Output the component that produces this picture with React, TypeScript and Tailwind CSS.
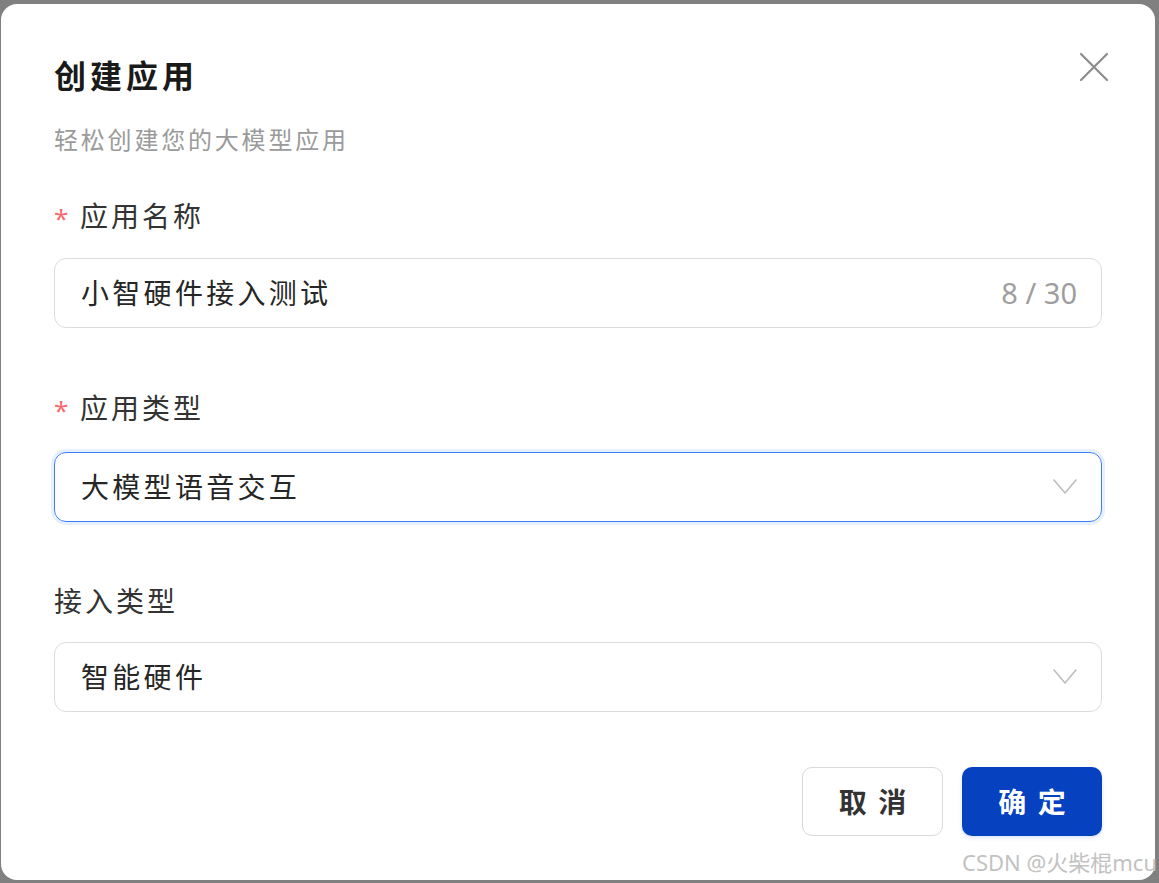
import { useState } from "react";

const font = { fontFamily: '"Noto Sans", "Noto Sans CJK SC", sans-serif' };

function Chevron() {
  return (
    <svg width="24" height="16" viewBox="0 0 24 16" fill="none">
      <polyline
        points="1,1 12,14 23,1"
        stroke="#bdbdbd"
        strokeWidth="1.6"
        strokeLinejoin="round"
        strokeLinecap="round"
      />
    </svg>
  );
}

function Label({ text, required }: { text: string; required?: boolean }) {
  return (
    <div className="flex items-center h-[36px] text-[28px] tracking-[3px] text-[#333333]">
      {required && (
        <span className="text-[#f56c6c] text-[26px] w-[26px] leading-none pt-[4px]">*</span>
      )}
      <span>{text}</span>
    </div>
  );
}

export default function App() {
  const [name] = useState("小智硬件接入测试");

  return (
    <div className="w-[1159px] h-[883px] bg-[#808080] pt-[4px] pl-[1px] pr-[4px] pb-[3px]" style={font}>
      <div className="relative h-full bg-white rounded-[16px] px-[53px] pt-[52px]">
        <button className="absolute right-[46px] top-[48px] w-[30px] h-[30px] flex items-center justify-center">
          <svg width="30" height="30" viewBox="0 0 30 30">
            <path d="M2 2 L28 28 M28 2 L2 28" stroke="#8c8c8c" strokeWidth="2.2" strokeLinecap="round" />
          </svg>
        </button>

        <div className="h-[40px] leading-[40px] text-[32px] font-bold tracking-[4px] text-[#1a1a1a]">创建应用</div>
        <div className="mt-[28px] h-[32px] leading-[32px] text-[24px] tracking-[2.8px] text-[#9a9a9a]">
          轻松创建您的大模型应用
        </div>

        <div className="mt-[42px]">
          <Label text="应用名称" required />
        </div>
        <div className="mt-[24px] h-[70px] rounded-[12px] border border-[#dcdcdc] flex items-center justify-between pl-[26px] pr-[24px]">
          <span className="text-[28px] tracking-[3.3px] text-[#262626]">{name}</span>
          <span className="text-[29px] text-[#9e9e9e]">{name.length} / 30</span>
        </div>

        <div className="mt-[62px]">
          <Label text="应用类型" required />
        </div>
        <div className="mt-[26px] h-[70px] rounded-[12px] border-[1.5px] border-[#3d80ff] shadow-[0_0_0_3px_rgba(61,128,255,0.12)] flex items-center justify-between pl-[26px] pr-[24px]">
          <span className="text-[28px] tracking-[3.3px] text-[#262626]">大模型语音交互</span>
          <Chevron />
        </div>

        <div className="mt-[61px]">
          <Label text="接入类型" />
        </div>
        <div className="mt-[23px] h-[70px] rounded-[12px] border border-[#dcdcdc] flex items-center justify-between pl-[26px] pr-[24px]">
          <span className="text-[28px] tracking-[3.3px] text-[#262626]">智能硬件</span>
          <Chevron />
        </div>

        <div className="mt-[55px] flex justify-end gap-[19px]">
          <button className="w-[141px] h-[69px] rounded-[10px] border border-[#d9d9d9] bg-white text-[28px] font-bold tracking-[2px] text-[#333333] pl-[2px]">
            取 消
          </button>
          <button className="w-[140px] h-[69px] rounded-[10px] bg-[#0641bf] text-[28px] font-bold tracking-[2px] text-white pl-[2px] shadow-[0_2px_4px_rgba(6,65,191,0.15)]">
            确 定
          </button>
        </div>

        <div className="absolute right-[-2px] bottom-[6px] text-[22px] leading-[24px] text-[#c2c2c2] whitespace-nowrap">
          CSDN @火柴棍mcu
        </div>
      </div>
    </div>
  );
}
